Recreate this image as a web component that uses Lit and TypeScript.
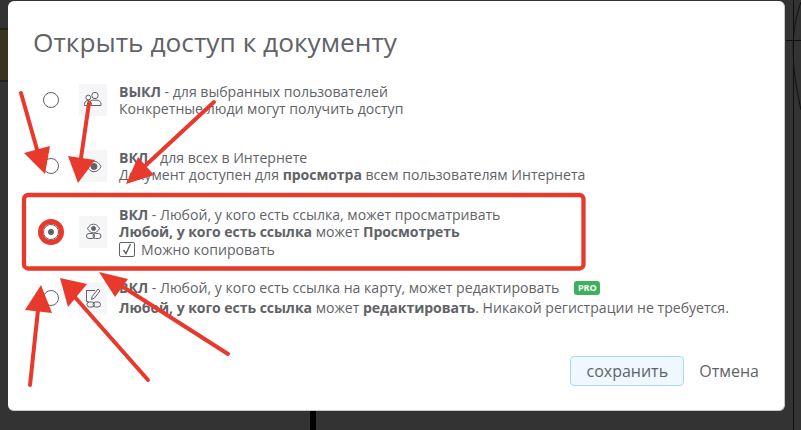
import { LitElement, html, css, svg } from "lit";
import { customElement } from "lit/decorators.js";

const peopleIcon = svg`
  <circle cx="16" cy="11.500" r="3.200"/>
  <circle cx="9.300" cy="13.500" r="2.400"/>
  <path d="M12.500 21.500h9.500v-1.500c0-2.300-2-3.700-4-3.800h-4.500c-1.200.1-2.200.6-2.800 1.400"/>
  <path d="M5.500 21.500h7v-1.200c0-2.300-1.600-3.800-3.500-3.800s-3.500 1.500-3.500 3.800z"/>`;
const eyeIcon = svg`
  <path d="M8 16.500c1.800-3.400 4-5.200 7-5.200s5.200 1.800 7 5.200c-1.800 3.400-4 5.200-7 5.200s-5.200-1.800-7-5.200z"/>
  <circle cx="15" cy="16.500" r="3" fill="#5f6368"/>`;
const eyeLinkIcon = svg`
  <path d="M8.500 12.500c1.500-2.800 3.400-4.300 6-4.300s4.500 1.500 6 4.300c-1.500 2.800-3.400 4.300-6 4.300s-4.500-1.500-6-4.300z"/>
  <circle cx="14.500" cy="12.500" r="2" fill="#5f6368"/>
  <rect x="7.500" y="17.500" width="8" height="5" rx="2.500"/>
  <rect x="14" y="17.500" width="8" height="5" rx="2.500"/>`;
const editLinkIcon = svg`
  <path d="M16 8.500H7.500v11h2"/>
  <path d="M12.500 17.500l.8-3.200L19 7l2 1.800-5.500 7.200z"/>
  <rect x="8" y="20" width="7.500" height="5" rx="2.500"/>
  <rect x="14" y="20" width="7.500" height="5" rx="2.500"/>`;

@customElement("app-root")
export class AppRoot extends LitElement {
  static styles = css`
    :host {
      display: block;
      position: relative;
      width: 801px;
      height: 430px;
      overflow: hidden;
      background: #333333;
      font-family: "Open Sans", "Noto Sans", sans-serif;
      color: #5f6368;
      box-sizing: border-box;
      padding: 1px 16px 0 8px;
    }
    .backdrop, .marks {
      position: absolute;
      left: 0;
      top: 0;
      width: 801px;
      height: 430px;
      pointer-events: none;
    }
    .modal {
      position: relative;
      box-sizing: border-box;
      height: 410px;
      background: #ffffff;
      border-radius: 6px;
      border-bottom: 1px solid #c8c8c8;
      border-right: 1px solid #c8c8c8;
      padding: 23px 24px 0 25px;
      display: flex;
      flex-direction: column;
    }
    h1 {
      margin: 0 0 7px;
      font-size: 26.300px;
      font-weight: 400;
      line-height: 36px;
      height: 36px;
    }
    .row {
      display: flex;
      align-items: center;
      height: 66px;
      padding-left: 10px;
    }
    .radio {
      flex: none;
      box-sizing: border-box;
      width: 16px;
      height: 16px;
      margin-right: 20px;
      border: 1px solid #5f6368;
      border-radius: 50%;
      display: flex;
      align-items: center;
      justify-content: center;
    }
    .dot {
      width: 6px;
      height: 6px;
      border-radius: 50%;
      background: #5f6368;
    }
    .icon {
      flex: none;
      width: 28px;
      height: 32px;
      margin-right: 12px;
      background: #f6f6f8;
    }
    .icon svg {
      display: block;
      width: 28px;
      height: 32px;
      fill: none;
      stroke: #5f6368;
      stroke-width: 1;
    }
    .text {
      font-size: 14.080px;
      line-height: 17px;
      white-space: nowrap;
    }
    .text.last { margin-bottom: 2px; }
    .line { display: flex; align-items: center; height: 17px; white-space: pre; }
    .line.badge { height: 19px; padding-bottom: 2px; }
    b { font-weight: 700; letter-spacing: -0.070px; }
    .copy { height: 19px; }
    .check {
      box-sizing: border-box;
      width: 16px;
      height: 15px;
      margin-right: 6px;
      border: 1px solid #5f6368;
      border-radius: 2px;
      display: flex;
      align-items: center;
      justify-content: center;
    }
    .check svg { width: 12px; height: 12px; fill: none; stroke: #5f6368; stroke-width: 1.400; }
    .pro {
      margin-left: 15px;
      width: 26px;
      height: 14px;
      border-radius: 3px;
      background: #3cb05c;
      color: #ffffff;
      font-size: 9px;
      font-weight: 700;
      line-height: 14px;
      text-align: center;
    }
    .actions {
      position: absolute;
      right: 25px;
      top: 355px;
      display: flex;
      align-items: center;
      gap: 15px;
      font-size: 16px;
    }
    .save {
      box-sizing: border-box;
      width: 114px;
      height: 30px;
      border: 1px solid #a6d8fb;
      border-radius: 4px;
      background: #f0f8ff;
      color: #5f6368;
      font: inherit;
      padding: 0;
    }
    .cancel { line-height: 30px; }
    .arrow { fill: #e8392d; }
    .shaft { stroke: #e8392d; stroke-width: 4; stroke-linecap: round; fill: none; }
  `;

  render() {
    return html`
      <svg class="backdrop" viewBox="0 0 801 430">
        <rect x="0" y="29" width="8" height="52" fill="#3a3320"/>
        <path d="M0 29h8M0 81h8" stroke="#111" stroke-width="1"/>
        <path d="M786 40.500h15" stroke="#111" stroke-width="1"/>
        <path d="M793.500 0V430" stroke="#111" stroke-width="1"/>
        <path d="M801 2C791 30 790 60 801 110" stroke="#111" stroke-width="1" fill="none"/>
        <rect x="310" y="411" width="6" height="19" fill="#000"/>
      </svg>
      <div class="modal">
        <h1>Открыть доступ к документу</h1>
        <div class="row">
          <span class="radio"></span>
          <span class="icon"><svg viewBox="0 0 28 32">${peopleIcon}</svg></span>
          <div class="text">
            <div class="line"><b>ВЫКЛ</b> - для выбранных пользователей</div>
            <div class="line">Конкретные люди могут получить доступ</div>
          </div>
        </div>
        <div class="row">
          <span class="radio"></span>
          <span class="icon"><svg viewBox="0 0 28 32">${eyeIcon}</svg></span>
          <div class="text">
            <div class="line"><b>ВКЛ</b> - для всех в Интернете</div>
            <div class="line">Документ доступен для <b>просмотра</b> всем пользователям Интернета</div>
          </div>
        </div>
        <div class="row">
          <span class="radio"><span class="dot"></span></span>
          <span class="icon"><svg viewBox="0 0 28 32">${eyeLinkIcon}</svg></span>
          <div class="text">
            <div class="line"><b>ВКЛ</b> - Любой, у кого есть ссылка, может просматривать</div>
            <div class="line"><b>Любой, у кого есть ссылка</b> может <b>Просмотреть</b></div>
            <div class="line copy"><span class="check"><svg viewBox="0 0 12 12"><path d="M2.500 7l2.500 3.500L9.500 1"/></svg></span>Можно копировать</div>
          </div>
        </div>
        <div class="row">
          <span class="radio"></span>
          <span class="icon"><svg viewBox="0 0 28 32">${editLinkIcon}</svg></span>
          <div class="text last">
            <div class="line badge"><b>ВКЛ</b> - Любой, у кого есть ссылка на карту, может редактировать<span class="pro">PRO</span></div>
            <div class="line"><b>Любой, у кого есть ссылка</b> может <b>редактировать</b>. Никакой регистрации не требуется.</div>
          </div>
        </div>
        <div class="actions">
          <button class="save">сохранить</button>
          <span class="cancel">Отмена</span>
        </div>
      </div>
      <svg class="marks" viewBox="0 0 801 430">
        <rect x="24" y="195" width="559.500" height="73.500" rx="4" fill="none" stroke="#e8392d" stroke-width="4.300"/>
        <circle cx="51" cy="232" r="10.500" fill="none" stroke="#e8392d" stroke-width="5"/>
        <path class="shaft" d="M21 93L38 153"/>
        <polygon class="arrow" points="45,174 24,153 50,146"/>
        <path class="shaft" d="M89 103L81 158"/>
        <polygon class="arrow" points="78,183 68,156 95,160"/>
        <path class="shaft" d="M214 102L146 165"/>
        <polygon class="arrow" points="126,184 138,157 154,175"/>
        <path class="shaft" d="M30 385L38 310"/>
        <polygon class="arrow" points="41,285 25,310 52,313"/>
        <path class="shaft" d="M148 380L73 295"/>
        <polygon class="arrow" points="60,278 68,307 87,284"/>
        <path class="shaft" d="M228 354L120 285"/>
        <polygon class="arrow" points="99,272 128,279 115,297"/>
      </svg>
    `;
  }
}
